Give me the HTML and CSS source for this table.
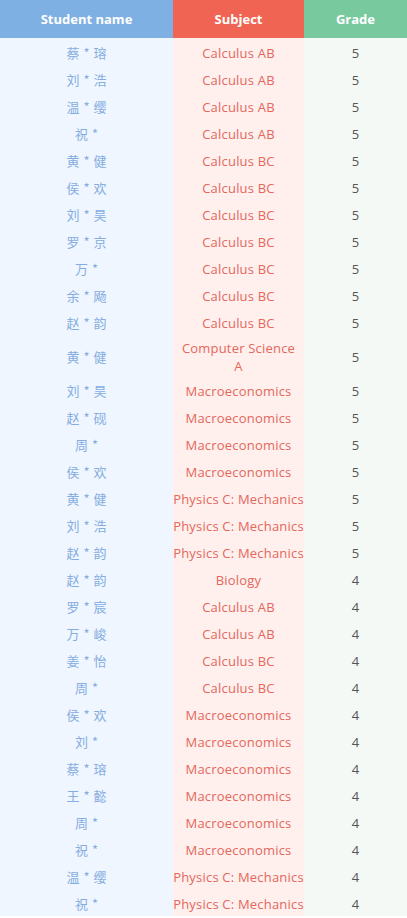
FILE: index.html
```html
<!DOCTYPE html>
<html>
<head>
<meta charset="utf-8">
<link rel="stylesheet" href="styles.css">
</head>
<body>
<table class="grades">
  <colgroup>
    <col class="c-name"><col class="c-subj"><col class="c-grade">
  </colgroup>
  <thead>
    <tr><th class="h-name">Student name</th><th class="h-subj">Subject</th><th class="h-grade">Grade</th></tr>
  </thead>
  <tbody>
    <tr><td class="name">蔡 * 瑢</td><td class="subj">Calculus AB</td><td class="grade">5</td></tr>
    <tr><td class="name">刘 * 浩</td><td class="subj">Calculus AB</td><td class="grade">5</td></tr>
    <tr><td class="name">温 * 缨</td><td class="subj">Calculus AB</td><td class="grade">5</td></tr>
    <tr><td class="name">祝 *</td><td class="subj">Calculus AB</td><td class="grade">5</td></tr>
    <tr><td class="name">黄 * 健</td><td class="subj">Calculus BC</td><td class="grade">5</td></tr>
    <tr><td class="name">侯 * 欢</td><td class="subj">Calculus BC</td><td class="grade">5</td></tr>
    <tr><td class="name">刘 * 昊</td><td class="subj">Calculus BC</td><td class="grade">5</td></tr>
    <tr><td class="name">罗 * 京</td><td class="subj">Calculus BC</td><td class="grade">5</td></tr>
    <tr><td class="name">万 *</td><td class="subj">Calculus BC</td><td class="grade">5</td></tr>
    <tr><td class="name">余 * 飏</td><td class="subj">Calculus BC</td><td class="grade">5</td></tr>
    <tr><td class="name">赵 * 韵</td><td class="subj">Calculus BC</td><td class="grade">5</td></tr>
    <tr><td class="name">黄 * 健</td><td class="subj">Computer Science<br>A</td><td class="grade">5</td></tr>
    <tr><td class="name">刘 * 昊</td><td class="subj">Macroeconomics</td><td class="grade">5</td></tr>
    <tr><td class="name">赵 * 砚</td><td class="subj">Macroeconomics</td><td class="grade">5</td></tr>
    <tr><td class="name">周 *</td><td class="subj">Macroeconomics</td><td class="grade">5</td></tr>
    <tr><td class="name">侯 * 欢</td><td class="subj">Macroeconomics</td><td class="grade">5</td></tr>
    <tr><td class="name">黄 * 健</td><td class="subj">Physics C: Mechanics</td><td class="grade">5</td></tr>
    <tr><td class="name">刘 * 浩</td><td class="subj">Physics C: Mechanics</td><td class="grade">5</td></tr>
    <tr><td class="name">赵 * 韵</td><td class="subj">Physics C: Mechanics</td><td class="grade">5</td></tr>
    <tr><td class="name">赵 * 韵</td><td class="subj">Biology</td><td class="grade">4</td></tr>
    <tr><td class="name">罗 * 宸</td><td class="subj">Calculus AB</td><td class="grade">4</td></tr>
    <tr><td class="name">万 * 峻</td><td class="subj">Calculus AB</td><td class="grade">4</td></tr>
    <tr><td class="name">姜 * 怡</td><td class="subj">Calculus BC</td><td class="grade">4</td></tr>
    <tr><td class="name">周 *</td><td class="subj">Calculus BC</td><td class="grade">4</td></tr>
    <tr><td class="name">侯 * 欢</td><td class="subj">Macroeconomics</td><td class="grade">4</td></tr>
    <tr><td class="name">刘 *</td><td class="subj">Macroeconomics</td><td class="grade">4</td></tr>
    <tr><td class="name">蔡 * 瑢</td><td class="subj">Macroeconomics</td><td class="grade">4</td></tr>
    <tr><td class="name">王 * 懿</td><td class="subj">Macroeconomics</td><td class="grade">4</td></tr>
    <tr><td class="name">周 *</td><td class="subj">Macroeconomics</td><td class="grade">4</td></tr>
    <tr><td class="name">祝 *</td><td class="subj">Macroeconomics</td><td class="grade">4</td></tr>
    <tr><td class="name">温 * 缨</td><td class="subj">Physics C: Mechanics</td><td class="grade">4</td></tr>
    <tr><td class="name">祝 *</td><td class="subj">Physics C: Mechanics</td><td class="grade">4</td></tr>
  </tbody>
</table>
</body>
</html>
```
FILE: styles.css
```css
html, body {
  margin: 0;
  padding: 0;
  background: #ffffff;
}
body {
  font-family: "Open Sans", "Noto Sans CJK SC", sans-serif;
  font-size: 13px;
}
.grades {
  width: 407px;
  border-collapse: collapse;
  border-spacing: 0;
  table-layout: fixed;
}
.c-name { width: 173px; }
.c-subj { width: 131px; }
.c-grade { width: 103px; }
.grades thead tr { height: 38px; }
.grades th {
  padding: 0;
  color: #ffffff;
  font-weight: 700;
  font-size: 13px;
  line-height: 18px;
  text-align: center;
  vertical-align: middle;
}
.h-name { background: #7fb0e3; }
.h-subj { background: #ef6453; }
.h-grade { background: #79c99f; }
.grades tbody tr { height: 27px; }
.grades td {
  padding: 3.5px 0 1.5px;
  line-height: 18px;
  text-align: center;
  vertical-align: middle;
  white-space: nowrap;
}
.name {
  background: #eff6ff;
  color: #86ade0;
  font-family: "Noto Sans CJK SC", sans-serif;
  word-spacing: 1px;
}
.subj {
  background: #fff0ee;
  color: #e4675b;
  letter-spacing: 0.2px;
}
.grade {
  background: #f4f9f6;
  color: #555555;
}
```
